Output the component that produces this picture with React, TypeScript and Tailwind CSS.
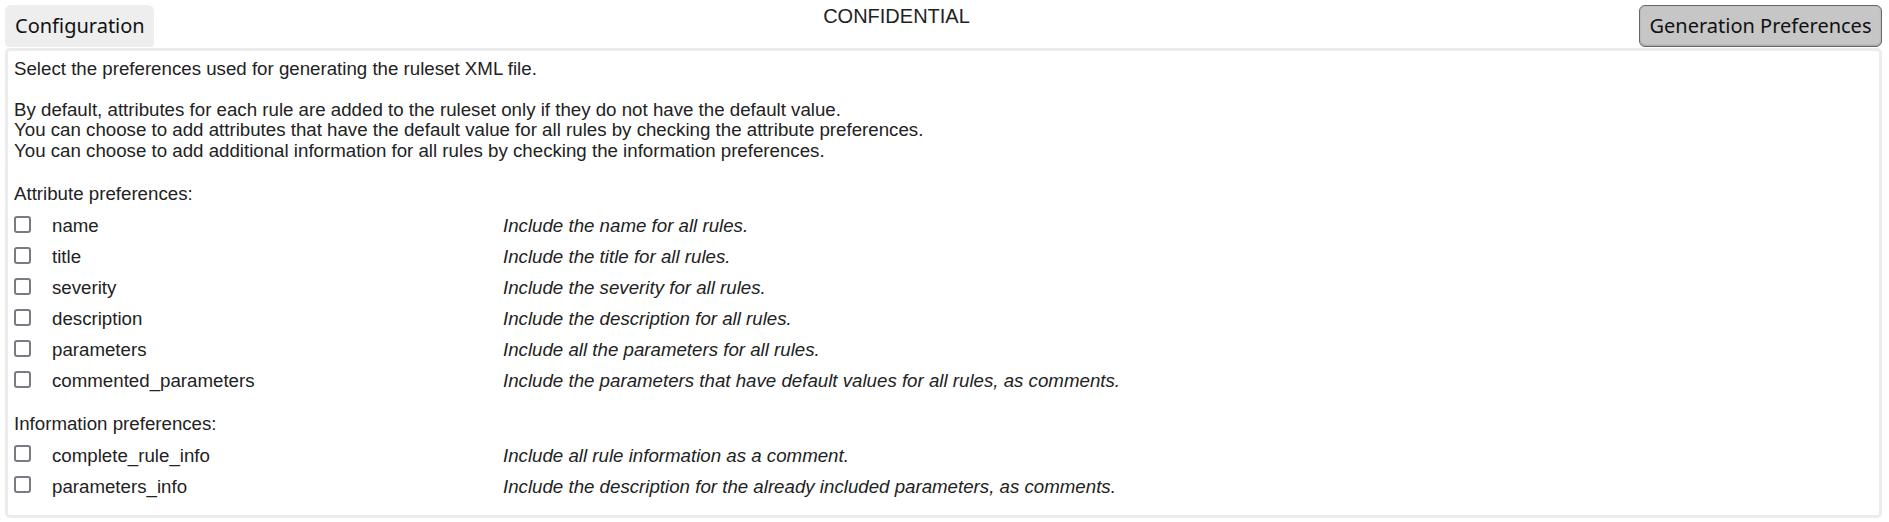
import React from "react";

type Pref = {
  key: string;
  desc: string;
};

const ATTRIBUTE_PREFS: Pref[] = [
  { key: "name", desc: "Include the name for all rules." },
  { key: "title", desc: "Include the title for all rules." },
  { key: "severity", desc: "Include the severity for all rules." },
  { key: "description", desc: "Include the description for all rules." },
  { key: "parameters", desc: "Include all the parameters for all rules." },
  {
    key: "commented_parameters",
    desc: "Include the parameters that have default values for all rules, as comments.",
  },
];

const INFO_PREFS: Pref[] = [
  { key: "complete_rule_info", desc: "Include all rule information as a comment." },
  {
    key: "parameters_info",
    desc: "Include the description for the already included parameters, as comments.",
  },
];

function PrefRow({ pref }: { pref: Pref }) {
  return (
    <div className="flex h-[31px] items-start">
      <div className="w-[38px] pt-[4.5px]">
        <div
          role="checkbox"
          aria-checked="false"
          className="h-[17px] w-[17px] rounded-[3px] border-2 border-[#7a7984] bg-white"
        />
      </div>
      <div className="w-[451px] pt-[5px]">{pref.key}</div>
      <div className="pt-[5px] italic">{pref.desc}</div>
    </div>
  );
}

export default function App() {
  return (
    <div className="min-h-screen bg-white font-['Liberation_Sans',Arial,sans-serif] text-[18.7px] leading-[20.5px] text-[#222]">
      <header className="flex items-start pl-[5px] pr-[7px] pt-[5px]">
        <div className="flex h-[42px] w-[149px] items-center rounded-t-[6px] rounded-b-[4px] bg-[#eeeeee] pl-[10px] font-['Noto_Sans',sans-serif] text-[20px] text-[#111]">
          Configuration
        </div>
        <div className="flex-1 text-center text-[20px] leading-[23px] text-[#222]">
          CONFIDENTIAL
        </div>
        <button className="flex h-[42px] w-[243px] items-center justify-center rounded-[6px] border border-[#666] bg-[#c6c6c6] font-['Noto_Sans',sans-serif] text-[20px] text-[#111] shadow-[inset_0_-1px_2px_rgba(0,0,0,0.18)]">
          Generation Preferences
        </button>
      </header>

      <main className="ml-[5px] mr-[7px] mt-px rounded-[5px] border-[3px] border-[#ececec] px-[6px] pb-[12px] pt-[7.5px]">
        <p>Select the preferences used for generating the ruleset XML file.</p>
        <p className="mt-[20.5px]">
          By default, attributes for each rule are added to the ruleset only if they do not have the default value.
        </p>
        <p>
          You can choose to add attributes that have the default value for all rules by checking the attribute preferences.
        </p>
        <p>You can choose to add additional information for all rules by checking the information preferences.</p>

        <p className="mb-[6.5px] mt-[23px]">Attribute preferences:</p>
        {ATTRIBUTE_PREFS.map((pref) => (
          <PrefRow key={pref.key} pref={pref} />
        ))}

        <p className="mb-[6px] mt-[17px]">Information preferences:</p>
        {INFO_PREFS.map((pref) => (
          <PrefRow key={pref.key} pref={pref} />
        ))}
      </main>
    </div>
  );
}
